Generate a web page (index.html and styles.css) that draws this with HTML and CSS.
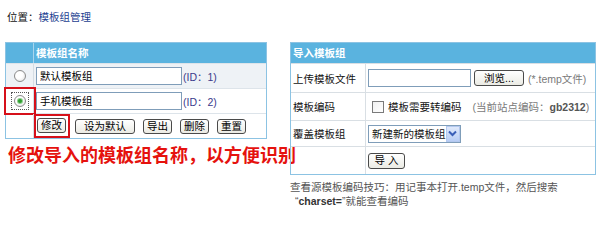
FILE: index.html
```html
<!DOCTYPE html>
<html lang="zh-CN">
<head>
<meta charset="utf-8">
<title>模板组管理</title>
<link rel="stylesheet" href="styles.css">
</head>
<body>
<div class="crumb">位置：<a class="crumb-link">模板组管理</a></div>
<div class="panels">
  <div class="left">
    <div class="gbox">
      <div class="ghead">
        <div class="cr"></div>
        <div class="cn">模板组名称</div>
      </div>
      <div class="grow alt">
        <div class="cr"><span class="radio"></span></div>
        <div class="cn"><span class="field">默认模板组</span><span class="id">(ID：1)</span></div>
      </div>
      <div class="grow">
        <div class="cr marked"><span class="focus"><span class="radio on"></span></span></div>
        <div class="cn"><span class="field">手机模板组</span><span class="id">(ID：2)</span></div>
      </div>
      <div class="grow">
        <div class="cr"></div>
        <div class="cn btns">
          <span class="mark-btn"><span class="btn">修改</span></span>
          <span class="btn wide first">设为默认</span>
          <span class="btn">导出</span>
          <span class="btn">删除</span>
          <span class="btn">重置</span>
        </div>
      </div>
    </div>
    <div class="tip">修改导入的模板组名称，以方便识别</div>
  </div>
  <div class="right">
    <div class="ibox">
      <div class="ihead">导入模板组</div>
      <div class="irow r1">
        <div class="lab">上传模板文件</div>
        <div class="val">
          <span class="file"></span>
          <span class="btn browse">浏览...</span>
          <span class="hint">(*.temp文件)</span>
        </div>
      </div>
      <div class="irow r2">
        <div class="lab">模板编码</div>
        <div class="val">
          <span class="check"></span>
          <span class="chk-label">模板需要转编码</span>
          <span class="hint enc">(当前站点编码：<b>gb2312</b>)</span>
        </div>
      </div>
      <div class="irow r3">
        <div class="lab">覆盖模板组</div>
        <div class="val">
          <span class="select"><span class="sel-text">新建新的模板组</span><span class="sel-arrow"><svg width="9" height="7" viewBox="0 0 9 7"><path d="M1 1.5 L4.5 5 L8 1.5" fill="none" stroke="#3a5fb8" stroke-width="2"/></svg></span></span>
        </div>
      </div>
      <div class="irow r4">
        <div class="lab"></div>
        <div class="val"><span class="btn imp">导 入</span></div>
      </div>
    </div>
    <div class="note">
      <div class="note-line">查看源模板编码技巧：用记事本打开.temp文件，然后搜索</div>
      <div class="note-line indent">“<b>charset=</b>”就能查看编码</div>
    </div>
  </div>
</div>
</body>
</html>
```

FILE: styles.css
```css
* { box-sizing: border-box; }
body {
  margin: 0;
  background: #fff;
  font-family: "Liberation Sans", "Noto Sans CJK SC", sans-serif;
  font-size: 10.5px;
  color: #111;
}
.crumb {
  padding: 10px 0 0 7px;
  line-height: 14px;
  height: 24px;
}
.crumb-link { color: #1d3f91; }
.panels {
  display: flex;
  margin-top: 18px;
  padding-left: 5px;
  gap: 23px;
}
.left { width: 262px; flex-shrink: 0; }
.gbox {
  border: 1px solid #8cc3e3;
  width: 262px;
}
.ghead {
  display: flex;
  height: 20px;
  background: #5ab3df;
}
.ghead .cr { width: 28px; border-right: 1px solid #a8d5ee; }
.ghead .cn {
  padding-left: 2px;
  color: #fff;
  font-weight: bold;
  line-height: 20px;
}
.grow {
  display: flex;
  height: 25px;
  border-top: 1px solid #dde4ea;
}
.grow.alt { background: #eef2f6; }
.grow .cr {
  width: 28px;
  flex-shrink: 0;
  border-right: 1px solid #d5dde4;
  display: flex;
  align-items: center;
  justify-content: center;
}
.grow .cn {
  flex: 1;
  display: flex;
  align-items: center;
  padding-left: 2px;
  white-space: nowrap;
}
.cr.marked { outline: 2px solid #d6101a; outline-offset: 0; }
.radio {
  width: 12px;
  height: 12px;
  border-radius: 50%;
  border: 1px solid #8b8b8b;
  background: radial-gradient(circle at 40% 40%, #fff 40%, #dcdcdc 100%);
  display: flex;
  align-items: center;
  justify-content: center;
}
.radio.on::after {
  content: "";
  width: 4px;
  height: 4px;
  border-radius: 50%;
  background: #2f9e2f;
  box-shadow: 0 0 0 1px #8fd08f;
}
.focus {
  border: 1px dotted #555;
  padding: 2px;
  display: flex;
}
.field {
  width: 146px;
  height: 18px;
  flex-shrink: 0;
  border: 1px solid #7f9db9;
  background: #fff;
  padding-left: 3px;
  line-height: 16px;
  color: #000;
}
.id { color: #3a3a8c; margin-left: 1px; }
.btn {
  display: inline-flex;
  align-items: center;
  justify-content: center;
  flex-shrink: 0;
  height: 15px;
  padding: 0 3px;
  border: 1px solid #4a4a4a;
  border-radius: 3px;
  background: linear-gradient(#ffffff, #ebebe4);
  color: #000;
  line-height: 13px;
  white-space: nowrap;
}
.btns { gap: 8px; }
.btns .btn { width: 29px; }
.btns .btn.wide { width: 60px; }
.btns .first { margin-left: -3px; }
.mark-btn {
  border: 2px solid #d6101a;
  padding: 2px 2px 3px 1px;
  display: inline-flex;
  margin-left: -2px;
}
.tip {
  margin-top: 5px;
  padding-left: 3px;
  font-family: "Noto Sans CJK SC", sans-serif;
  font-size: 18px;
  font-weight: bold;
  color: #e5120e;
  line-height: 20px;
  white-space: nowrap;
}
.right { width: 306px; flex-shrink: 0; }
.ibox { border: 1px solid #8cc3e3; }
.ihead {
  height: 20px;
  background: #5ab3df;
  color: #fff;
  font-weight: bold;
  line-height: 20px;
  padding-left: 2px;
}
.irow {
  display: flex;
  border-top: 1px solid #d9dfe4;
}
.irow.r1 { height: 29px; }
.irow.r2 { height: 28px; }
.irow.r3 { height: 26px; }
.irow.r4 { height: 28px; }
.lab {
  width: 75px;
  flex-shrink: 0;
  border-right: 1px solid #d9dfe4;
  display: flex;
  align-items: center;
  padding-left: 2px;
  white-space: nowrap;
}
.val {
  flex: 1;
  display: flex;
  align-items: center;
  padding-left: 2px;
  white-space: nowrap;
  min-width: 0;
}
.file {
  width: 103px;
  height: 18px;
  flex-shrink: 0;
  border: 1px solid #7f9db9;
  background: #fff;
}
.browse { width: 50px; margin-left: 3px; height: 16px; }
.hint { color: #7a7a7a; margin-left: 4px; white-space: nowrap; flex-shrink: 0; }
.check {
  width: 12px;
  height: 12px;
  flex-shrink: 0;
  border: 1px solid #7a7a7a;
  background: linear-gradient(135deg, #f0f0f0, #fff);
  margin-left: 4px;
}
.chk-label { margin-left: 4px; flex-shrink: 0; }
.enc { margin-left: 11px; }
.enc b { color: #555; font-weight: bold; }
.select {
  display: flex;
  align-items: center;
  width: 93px;
  height: 18px;
  flex-shrink: 0;
  border: 1px solid #7f9db9;
  background: #fff;
}
.sel-text { flex: 1; padding-left: 3px; white-space: nowrap; }
.sel-arrow {
  width: 16px;
  height: 16px;
  background: linear-gradient(#dfe9fb, #b8cdf5);
  border: 1px solid #b3c8ef;
  display: flex;
  align-items: center;
  justify-content: center;
}
.imp { width: 37px; height: 16px; }
.note {
  margin-top: 5px;
  color: #555;
  white-space: nowrap;
}
.note-line { height: 14px; line-height: 14px; }
.indent { padding-left: 5px; }
.note b { color: #333; }
```
